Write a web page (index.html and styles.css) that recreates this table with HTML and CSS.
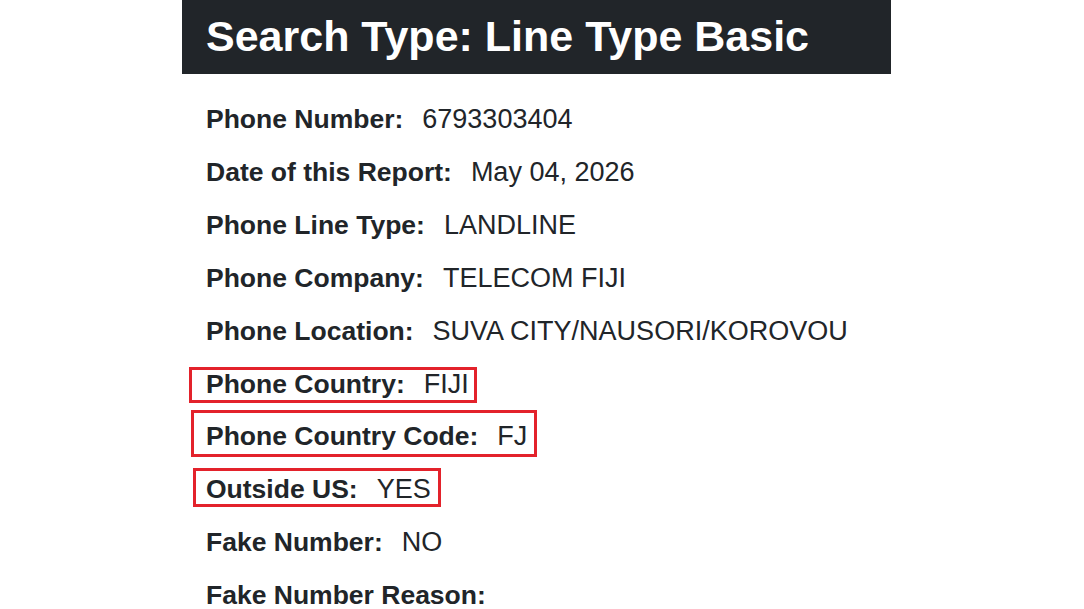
FILE: index.html
```html
<!DOCTYPE html>
<html lang="en">
<head>
<meta charset="utf-8">
<title>Search Type: Line Type Basic</title>
<link rel="stylesheet" href="styles.css">
</head>
<body>
<main class="report">
  <header class="report-header">
    <h1 class="report-title">Search Type: Line Type Basic</h1>
  </header>
  <section class="rows">
    <p class="row"><span class="field"><b class="label">Phone Number:</b><span class="value">6793303404</span></span></p>
    <p class="row"><span class="field"><b class="label">Date of this Report:</b><span class="value">May 04, 2026</span></span></p>
    <p class="row"><span class="field"><b class="label">Phone Line Type:</b><span class="value">LANDLINE</span></span></p>
    <p class="row"><span class="field"><b class="label">Phone Company:</b><span class="value">TELECOM FIJI</span></span></p>
    <p class="row"><span class="field"><b class="label">Phone Location:</b><span class="value">SUVA CITY/NAUSORI/KOROVOU</span></span></p>
    <p class="row"><span class="field mark mark-a"><b class="label">Phone Country:</b><span class="value">FIJI</span></span></p>
    <p class="row"><span class="field mark mark-b"><b class="label">Phone Country Code:</b><span class="value">FJ</span></span></p>
    <p class="row"><span class="field mark mark-c"><b class="label">Outside US:</b><span class="value">YES</span></span></p>
    <p class="row"><span class="field"><b class="label">Fake Number:</b><span class="value">NO</span></span></p>
    <p class="row"><span class="field"><b class="label">Fake Number Reason:</b><span class="value"></span></span></p>
  </section>
</main>
</body>
</html>
```

FILE: styles.css
```css
html, body {
  margin: 0;
  padding: 0;
  background: #ffffff;
}

body {
  font-family: "Liberation Sans", Arial, sans-serif;
  color: #212529;
  overflow: hidden;
}

.report {
  width: 709px;
  margin-left: 182px;
}

.report-header {
  background: #212529;
  padding: 12px 24px 14px;
}

.report-title {
  margin: 0;
  font-size: 43px;
  line-height: 48px;
  font-weight: 700;
  color: #ffffff;
  white-space: nowrap;
}

.rows {
  padding: 19px 24px 0;
}

.row {
  margin: 0;
  font-size: 26.5px;
  line-height: 52.9px;
  white-space: nowrap;
}

.field {
  display: inline-block;
  position: relative;
}

.label {
  font-weight: 700;
}

.value {
  margin-left: 19px;
  font-size: 27px;
}

.mark::after {
  content: "";
  position: absolute;
  border: 3px solid #e3222b;
  pointer-events: none;
}

.mark-a::after {
  top: 9px;
  bottom: 7px;
  left: -17px;
  right: -8px;
}

.mark-b::after {
  top: 0px;
  bottom: 6px;
  left: -15px;
  right: -10px;
}

.mark-c::after {
  top: 5px;
  bottom: 9px;
  left: -13px;
  right: -10px;
}
```
